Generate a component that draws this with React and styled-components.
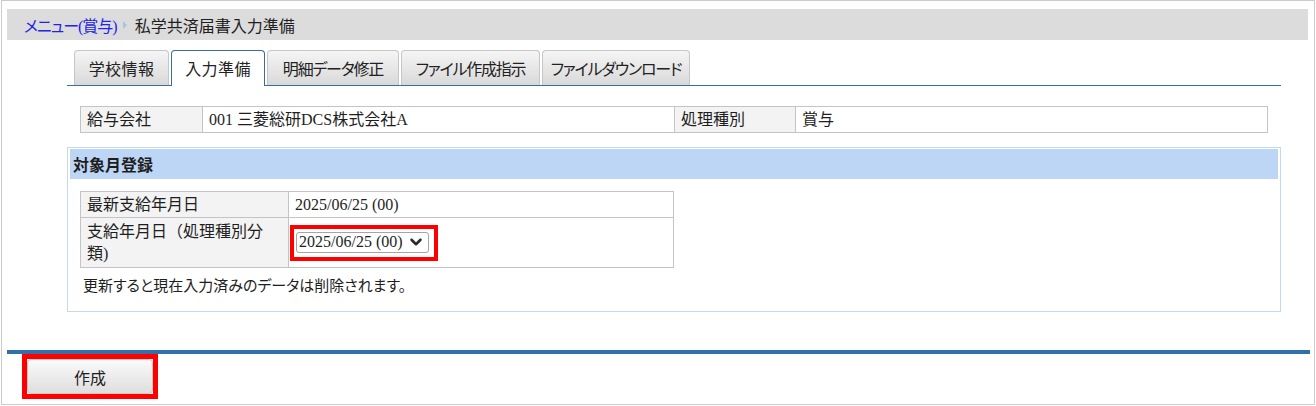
import styled, { createGlobalStyle } from 'styled-components';
import { ChevronDown } from 'lucide-react';

const GlobalStyle = createGlobalStyle`
  body {
    margin: 0;
    background: #fff;
    color: #1e1e1e;
    font-family: 'Liberation Serif', 'Noto Sans CJK JP', serif;
    font-feature-settings: 'palt';
  }
  * { box-sizing: border-box; }
`;

const Frame = styled.div`
  width: 1314px;
  height: 405px;
  margin-left: 1px;
  border: 1px solid #cbcbcb;
  padding: 8px 6px 0 5px;
  display: flex;
  flex-direction: column;
`;

const Header = styled.div`
  height: 31px;
  background: #dcdcdc;
  display: flex;
  align-items: center;
  padding-left: 17px;
  font-size: 16px;
`;

const Crumb = styled.a`
  color: #2323e6;
  text-decoration: none;
  letter-spacing: -1px;
`;

const Arrow = styled.span`
  width: 0;
  height: 0;
  margin: 0 8px 0 6px;
  border-top: 4px solid transparent;
  border-bottom: 4px solid transparent;
  border-left: 4px solid #a6c2e6;
`;

const Content = styled.div`
  padding: 10px 27px 0 60px;
`;

const TabBar = styled.div`
  display: flex;
  gap: 2px;
  padding-left: 7px;
  border-bottom: 1px solid #3a6a9e;
`;

const Tab = styled.div`
  width: ${({ w }) => w}px;
  display: flex;
  align-items: center;
  justify-content: center;
  font-size: 16px;
  letter-spacing: ${({ tight }) => (tight ? '-1.2px' : '0.4px')};
  color: #222;
  border: 1px solid ${({ active }) => (active ? '#3a6a9e' : '#c6c6c6')};
  border-bottom: none;
  border-radius: 4px 4px 0 0;
  margin-bottom: ${({ active }) => (active ? '-1px' : '0')};
  height: ${({ active }) => (active ? '36px' : '35px')};
  padding-bottom: ${({ active }) => (active ? '1px' : '0')};
  background: ${({ active }) =>
    active ? '#fff' : 'linear-gradient(#f5f5f5, #d9d9d9)'};
`;

const InfoTable = styled.table`
  margin: 20px 13px 0;
  width: calc(100% - 26px);
  border-collapse: collapse;
  font-size: 16px;
`;

const Cell = styled.td`
  height: 26px;
  padding: 0 6px;
  border: 1px solid #c4c4c4;
  background: ${({ label }) => (label ? '#f3f3f3' : '#fff')};
  width: ${({ w }) => w || 'auto'};
  line-height: 22px;
  vertical-align: middle;
  font-feature-settings: normal;
`;

const Section = styled.div`
  margin-top: 14px;
  border: 1px solid #c3d9f3;
  padding: 1px 2px 16px;
`;

const SectionTitle = styled.div`
  height: 30px;
  background: #bed6f5;
  display: flex;
  align-items: center;
  padding-left: 3px;
  font-weight: bold;
  font-size: 16px;
  font-feature-settings: normal;
`;

const SectionBody = styled.div`
  padding: 12px 10px 0;
`;

const DateTable = styled.table`
  width: 594px;
  border-collapse: collapse;
  font-size: 16px;
`;

const Highlight = styled.div`
  display: inline-flex;
  border: ${({ thick }) => thick}px solid #ff0000;
  padding: ${({ pad }) => pad || 0};
`;

const SelectBox = styled.div`
  display: flex;
  align-items: center;
  gap: 4px;
  height: 21px;
  padding: 0 3px 0 2px;
  border: 1px solid #a5a5a5;
  border-radius: 3px;
  background: #fff;
  font-size: 16px;
  svg { color: #2a2a2a; }
`;

const Note = styled.div`
  margin-top: 6px;
  padding-left: 3px;
  font-size: 15px;
`;

const Divider = styled.div`
  margin-top: 38px;
  height: 4px;
  background: #3271a8;
  margin-right: -2px;
`;

const Footer = styled.div`
  padding-left: 15px;
`;

const Button = styled.button`
  width: 126px;
  height: 35px;
  border: 1px solid #c8c8c8;
  border-radius: 4px;
  background: linear-gradient(#fafafa, #dedede);
  font-family: 'Noto Sans CJK JP', sans-serif;
  font-size: 16px;
  color: #1e1e1e;
  cursor: pointer;
`;

const tabs = [
  { label: '学校情報', w: 95 },
  { label: '入力準備', w: 94, active: true },
  { label: '明細データ修正', w: 132, tight: true },
  { label: 'ファイル作成指示', w: 139, tight: true },
  { label: 'ファイルダウンロード', w: 148, tight: true },
];

export default function App() {
  return (
    <>
      <GlobalStyle />
      <Frame>
        <Header>
          <Crumb href="#">メニュー(賞与)</Crumb>
          <Arrow />
          <span>私学共済届書入力準備</span>
        </Header>
        <Content>
          <TabBar>
            {tabs.map(t => (
              <Tab key={t.label} w={t.w} active={t.active} tight={t.tight}>
                {t.label}
              </Tab>
            ))}
          </TabBar>
          <InfoTable>
            <tbody>
              <tr>
                <Cell label w="122px">給与会社</Cell>
                <Cell>001 三菱総研DCS株式会社A</Cell>
                <Cell label w="121px">処理種別</Cell>
                <Cell w="472px">賞与</Cell>
              </tr>
            </tbody>
          </InfoTable>
          <Section>
            <SectionTitle>対象月登録</SectionTitle>
            <SectionBody>
              <DateTable>
                <tbody>
                  <tr>
                    <Cell label w="208px">最新支給年月日</Cell>
                    <Cell>2025/06/25 (00)</Cell>
                  </tr>
                  <tr>
                    <Cell label style={{ height: 50 }}>
                      支給年月日（処理種別分類)
                    </Cell>
                    <Cell style={{ padding: '0 0 0 1px' }}>
                      <Highlight thick={4} pad="3px 5px 4px 2px">
                        <SelectBox>
                          2025/06/25 (00)
                          <ChevronDown size={18} strokeWidth={3.4} />
                        </SelectBox>
                      </Highlight>
                    </Cell>
                  </tr>
                </tbody>
              </DateTable>
              <Note>更新すると現在入力済みのデータは削除されます。</Note>
            </SectionBody>
          </Section>
        </Content>
        <Divider />
        <Footer>
          <Highlight thick={5}>
            <Button>作成</Button>
          </Highlight>
        </Footer>
      </Frame>
    </>
  );
}
